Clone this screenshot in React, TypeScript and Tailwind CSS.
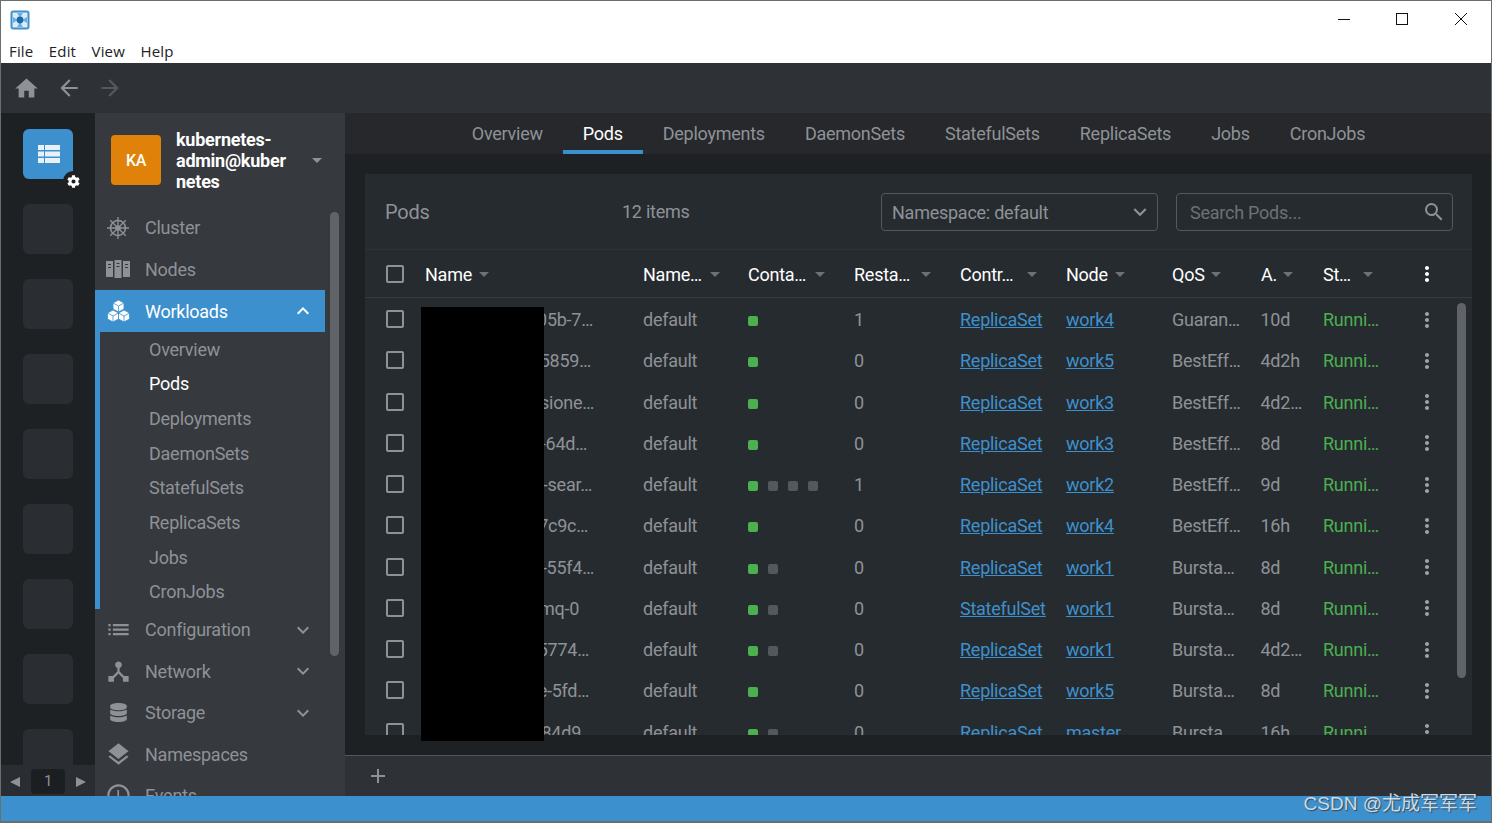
import { FaDatabase, FaCog } from "react-icons/fa";
import {
  MdAccessTime,
  MdAdd,
  MdArrowBack,
  MdArrowDropDown,
  MdArrowForward,
  MdDeviceHub,
  MdExpandLess,
  MdExpandMore,
  MdHome,
  MdLayers,
  MdList,
  MdMoreVert,
  MdSearch,
} from "react-icons/md";

const FONT = "font-['Roboto',sans-serif]";

const pods = [
  { tail: "05b-7…", end: 168, ctrl: "ReplicaSet", node: "work4", qos: "Guaran…", age: "10d", restarts: "1", extra: 0 },
  { tail: "5859…", end: 166, ctrl: "ReplicaSet", node: "work5", qos: "BestEff…", age: "4d2h", restarts: "0", extra: 0 },
  { tail: "sione…", end: 169, ctrl: "ReplicaSet", node: "work3", qos: "BestEff…", age: "4d2…", restarts: "0", extra: 0 },
  { tail: "-64d…", end: 162, ctrl: "ReplicaSet", node: "work3", qos: "BestEff…", age: "8d", restarts: "0", extra: 0 },
  { tail: "-sear…", end: 167, ctrl: "ReplicaSet", node: "work2", qos: "BestEff…", age: "9d", restarts: "1", extra: 3 },
  { tail: "7c9c…", end: 163, ctrl: "ReplicaSet", node: "work4", qos: "BestEff…", age: "16h", restarts: "0", extra: 0 },
  { tail: "-55f4…", end: 169, ctrl: "ReplicaSet", node: "work1", qos: "Bursta…", age: "8d", restarts: "0", extra: 1 },
  { tail: "mq-0", end: 154, ctrl: "StatefulSet", node: "work1", qos: "Bursta…", age: "8d", restarts: "0", extra: 1 },
  { tail: "5774…", end: 164, ctrl: "ReplicaSet", node: "work1", qos: "Bursta…", age: "4d2…", restarts: "0", extra: 1 },
  { tail: "e-5fd…", end: 164, ctrl: "ReplicaSet", node: "work5", qos: "Bursta…", age: "8d", restarts: "0", extra: 0 },
  { tail: "84d9", end: 156, ctrl: "ReplicaSet", node: "master", qos: "Bursta…", age: "16h", restarts: "0", extra: 1 },
];

const headers = [
  { label: "Name…", cls: "w-[105px]", box: "w-[68px]" },
  { label: "Conta…", cls: "w-[106px]", box: "w-[68px]" },
  { label: "Resta…", cls: "w-[106px]", box: "w-[68px]" },
  { label: "Contr…", cls: "w-[106px]", box: "w-[68px]" },
  { label: "Node", cls: "w-[106px]", box: "w-[50px]" },
  { label: "QoS", cls: "w-[89px]", box: "w-[40px]" },
  { label: "A.", cls: "w-[62px]", box: "w-[23px]" },
  { label: "St…", cls: "w-[104px]", box: "w-[41px]" },
];

const tabs = ["Overview", "Pods", "Deployments", "DaemonSets", "StatefulSets", "ReplicaSets", "Jobs", "CronJobs"];
const subItems = ["Overview", "Pods", "Deployments", "DaemonSets", "StatefulSets", "ReplicaSets", "Jobs", "CronJobs"];

function Checkbox() {
  return <div className="h-[18px] w-[18px] shrink-0 rounded-[2px] border-2 border-[#8e9297]" />;
}

function AppLogo() {
  return (
    <svg width="20" height="20" viewBox="0 0 20 20">
      <rect x="0.5" y="0.5" width="19" height="19" rx="3" fill="#3d90ce" />
      <rect x="2.500" y="2.500" width="15" height="15" fill="#dcecf7" />
      <path d="M7 3l3 5 3-5zM17 7l-5 3 5 3zM13 17l-3-5-3 5zM3 13l5-3-5-3z" fill="#6fb0e0" />
      <circle cx="10" cy="10" r="3.400" fill="#1c6aa8" />
    </svg>
  );
}

function WheelIcon() {
  return (
    <svg width="24" height="24" viewBox="0 0 24 24" fill="none" stroke="#8e9297" strokeWidth="1.6">
      <circle cx="12" cy="12" r="7.500" />
      <circle cx="12" cy="12" r="2" fill="#8e9297" />
      <path d="M12 1v22M1 12h22M4.200 4.200l15.600 15.600M19.800 4.200L4.200 19.800" strokeWidth="1.3" />
    </svg>
  );
}

function NodesIcon() {
  return (
    <svg width="24" height="20" viewBox="0 0 24 20" fill="#8e9297">
      <path d="M0 2h7v16H0zM8.500 1h7v18h-7zM17 2h7v16h-7z" />
      <path d="M2 5h3v1H2zM2 8h3v1H2zM10.500 4h3v1h-3zM10.500 7h3v1h-3zM19 5h3v1h-3zM19 8h3v1h-3z" fill="#36393e" />
    </svg>
  );
}

function CubesIcon() {
  return (
    <svg width="23" height="22" viewBox="0 0 23 22">
      <g fill="#fff" stroke="#3d90ce" strokeWidth="0.8">
        <path d="M11.500 0l5.500 3v6l-5.500 3-5.500-3V3z" />
        <path d="M6 10l5.500 3v6l-5.500 3-5.500-3v-6z" />
        <path d="M17 10l5.500 3v6l-5.500 3-5.500-3v-6z" />
        <path fill="none" d="M6 3l5.500 3 5.500-3M11.500 6v6M.5 13l5.500 3 5.500-3M6 16v6M11.500 13l5.500 3 5.500-3M17 16v6" />
      </g>
    </svg>
  );
}

function SideItem({ icon, label, chevron }: { icon: React.ReactNode; label: string; chevron?: boolean }) {
  return (
    <div className="flex h-[41.500px] shrink-0 items-center text-[#8e9297]">
      <div className="flex w-[46px] shrink-0 justify-center">{icon}</div>
      <span className="ml-[4px] flex-1">{label}</span>
      {chevron && <MdExpandMore size={24} className="mr-[10px]" />}
    </div>
  );
}

function PodRow({ pod }: { pod: (typeof pods)[number] }) {
  return (
    <div className="flex h-[41.250px] shrink-0 items-center text-[#8e9297]">
      <div className="flex w-[60px] shrink-0 pb-[1px] pl-[21px]">
        <Checkbox />
      </div>
      <div className="w-[218px] shrink-0">
        <div className="truncate text-right" style={{ width: pod.end }}>
          {pod.tail}
        </div>
      </div>
      <div className="w-[105px] shrink-0">default</div>
      <div className="flex w-[106px] shrink-0 items-center gap-[10px] pt-[3px]">
        <span className="h-[10px] w-[10px] rounded-[2px] bg-[#4caf50]" />
        {pod.extra > 0 && <span className="h-[10px] w-[10px] rounded-[2px] bg-[#54585d]" />}
        {pod.extra > 1 && <span className="h-[10px] w-[10px] rounded-[2px] bg-[#54585d]" />}
        {pod.extra > 2 && <span className="h-[10px] w-[10px] rounded-[2px] bg-[#54585d]" />}
      </div>
      <div className="w-[106px] shrink-0">{pod.restarts}</div>
      <div className="w-[106px] shrink-0 text-[#3d90ce] underline">{pod.ctrl}</div>
      <div className="w-[106px] shrink-0 text-[#3d90ce] underline">{pod.node}</div>
      <div className="w-[88.500px] shrink-0">{pod.qos}</div>
      <div className="w-[62.500px] shrink-0">{pod.age}</div>
      <div className="w-[92px] shrink-0 text-[#4caf50]">Runni…</div>
      <MdMoreVert size={24} className="shrink-0 text-[#a0a4a8]" />
    </div>
  );
}

export default function App() {
  return (
    <div className={`${FONT} relative flex h-[823px] w-[1492px] flex-col overflow-hidden border border-b-2 border-[#6b6f6b] bg-white text-[18px] tracking-[-0.25px]`}>
      <div className="flex h-[37px] shrink-0 items-center justify-between pl-[9px] pr-[24px]">
        <AppLogo />
        <div className="flex items-center gap-[46px] pb-[2px]">
          <svg width="12" height="12" viewBox="0 0 12 12" stroke="#111" fill="none"><path d="M0 6.500h12" /></svg>
          <svg width="12" height="12" viewBox="0 0 12 12" stroke="#111" fill="none" className="mr-[1px]"><rect x="0.500" y="0.500" width="11" height="11" /></svg>
          <svg width="12" height="12" viewBox="0 0 12 12" stroke="#111" fill="none"><path d="M0 0l12 12M12 0L0 12" /></svg>
        </div>
      </div>
      <div className="flex h-[25px] shrink-0 items-center gap-[15.500px] pl-[8px] pt-[2px] font-['Open_Sans',sans-serif] text-[15px] tracking-[0.15px] text-[#222]">
        <span>File</span>
        <span>Edit</span>
        <span>View</span>
        <span>Help</span>
      </div>

      <div className="flex h-[50px] shrink-0 items-center bg-[#2e3136] pl-[12px]">
        <MdHome size={27} className="text-[#8e9297]" />
        <MdArrowBack size={26} className="ml-[16px] text-[#8e9297]" />
        <MdArrowForward size={26} className="ml-[15px] text-[#55595e]" />
      </div>

      <div className="flex min-h-0 flex-1">
        <div className="flex w-[94px] shrink-0 flex-col bg-[#1e2124]">
          <div className="relative flex min-h-0 flex-1 flex-col items-center gap-[25px] overflow-hidden pt-[16px]">
            <div className="relative flex h-[50px] w-[50px] shrink-0 items-center justify-center rounded-[6px] bg-[#3d90ce] pl-[1px]">
              <svg width="22" height="18" viewBox="0 0 22 18" fill="#e8f0f8">
                <path d="M0 0h6v5H0zM7 0h15v5H7zM0 6.500h6v5H0zM7 6.500h15v5H7zM0 13h6v5H0zM7 13h15v5H7z" />
              </svg>
              <div className="absolute -bottom-[12px] -right-[10px] flex h-[20px] w-[20px] items-center justify-center rounded-full bg-[#1e2124]">
                <FaCog size={13} className="text-white" />
              </div>
            </div>
            {[0, 1, 2, 3, 4, 5, 6, 7].map((i) => (
              <div key={i} className="h-[50px] w-[50px] shrink-0 rounded-[6px] bg-[#2a2d31]" />
            ))}
          </div>
          <div className="flex h-[31px] shrink-0 items-center justify-between bg-[#2a2d31] pl-[8px] pr-[8px] pt-[2px] text-[#8e9297]">
            <svg width="12" height="12" viewBox="0 0 12 12" fill="#8e9297"><path d="M11 1v10L1 6z" /></svg>
            <div className="flex h-[25px] w-[34px] items-center justify-center rounded-[4px] bg-[#1c1f22] text-[15px]">1</div>
            <svg width="12" height="12" viewBox="0 0 12 12" fill="#8e9297"><path d="M1 1v10l10-5z" /></svg>
          </div>
        </div>

        <div className="relative flex w-[250px] shrink-0 flex-col overflow-hidden bg-[#36393e]">
          <div className="flex h-[94px] shrink-0 items-center pl-[16px]">
            <div className="flex h-[50px] w-[50px] shrink-0 items-center justify-center rounded-[4px] bg-[#e08109] pt-[1px] text-[16px] font-medium text-white">KA</div>
            <div className="ml-[15px] w-[112px] break-all text-[18px] font-bold leading-[21px] text-white">
              kubernetes-
              <br />
              admin@kuber
              <br />
              netes
            </div>
            <MdArrowDropDown size={24} className="ml-[17px] shrink-0 text-[#8e9297]" />
          </div>
          <div className="flex w-[230px] flex-col">
            <SideItem icon={<WheelIcon />} label="Cluster" />
            <SideItem icon={<NodesIcon />} label="Nodes" />
            <div className="flex h-[42px] shrink-0 items-center bg-[#3d90ce] text-white">
              <div className="flex w-[46px] shrink-0 justify-center">
                <CubesIcon />
              </div>
              <span className="ml-[4px] flex-1">Workloads</span>
              <MdExpandLess size={24} className="mr-[10px]" />
            </div>
            <div className="flex h-[277px] shrink-0 flex-col justify-around border-l-[5px] border-[#3d90ce] pl-[49px] text-[#8e9297]">
              {subItems.map((s) => (
                <span key={s} className={s === "Pods" ? "text-white" : ""}>{s}</span>
              ))}
            </div>
            <SideItem icon={<MdList size={27} />} label="Configuration" chevron />
            <SideItem icon={<MdDeviceHub size={27} />} label="Network" chevron />
            <SideItem icon={<FaDatabase size={19} />} label="Storage" chevron />
            <SideItem icon={<MdLayers size={27} />} label="Namespaces" />
            <SideItem icon={<MdAccessTime size={27} />} label="Events" />
          </div>
          <div className="absolute right-[6px] top-[99px] h-[444px] w-[9px] rounded-[5px] bg-[#606368]" />
        </div>

        <div className="flex min-w-0 flex-1 flex-col bg-[#1e2124]">
          <div className="flex h-[41px] shrink-0 justify-center bg-[#26282b] pl-[1px]">
            {tabs.map((t) => (
              <div key={t} className={`flex h-[41px] items-center border-b-[4px] px-[20px] pt-[3px] ${t === "Pods" ? "border-[#3d90ce] text-white" : "border-transparent text-[#8e9297]"}`}>
                {t}
              </div>
            ))}
          </div>
          <div className="flex min-h-0 flex-1 flex-col py-[20px] pl-[20px] pr-[19px]">
            <div className="relative flex min-h-0 flex-1 flex-col overflow-hidden bg-[#262b2f]">
              <div className="flex h-[76px] shrink-0 items-center border-b border-[#2f3438] pl-[20px] pr-[19px] text-[#8e9297]">
                <span className="w-[237px] shrink-0 text-[20px]">Pods</span>
                <span className="w-[68px] shrink-0 whitespace-nowrap text-[18px]">12 items</span>
                <div className="ml-[191px] flex h-[38px] w-[277px] shrink-0 items-center justify-between rounded-[4px] border border-[#54585d] pl-[10px] pr-[4px]">
                  <span className="pt-[1px]">Namespace: default</span>
                  <MdExpandMore size={26} />
                </div>
                <div className="ml-[18px] flex h-[38px] w-[277px] shrink-0 items-center justify-between rounded-[4px] border border-[#54585d] pl-[13px] pr-[6px]">
                  <span className="pt-[1px] text-[#6d7176]">Search Pods...</span>
                  <MdSearch size={24} />
                </div>
              </div>
              <div className="flex h-[48px] shrink-0 items-center border-b border-[#363a3e] pt-[1px] text-white">
                <div className="flex w-[60px] shrink-0 pl-[21px]">
                  <Checkbox />
                </div>
                <div className="flex w-[218px] shrink-0 items-center">
                  Name
                  <MdArrowDropDown size={24} className="text-[#6d7176]" />
                </div>
                {headers.map((h) => (
                  <div key={h.label} className={`flex shrink-0 items-center ${h.cls}`}>
                    <span className={h.box}>{h.label}</span>
                    <MdArrowDropDown size={24} className="-ml-[8px] text-[#6d7176]" />
                  </div>
                ))}
                <MdMoreVert size={24} className="-ml-[12px] shrink-0" />
              </div>
              <div className="relative min-h-0 flex-1 overflow-hidden pt-[1px]">
                {pods.map((p, i) => (
                  <PodRow key={i} pod={p} />
                ))}
                <div className="absolute right-[6px] top-[5px] h-[375px] w-[9px] rounded-[5px] bg-[#606368]" />
              </div>
            </div>
          </div>
          <div className="flex h-[41px] shrink-0 items-center border-t border-[#54585d] bg-[#2e3136] pl-[21px] text-[#8e9297]">
            <MdAdd size={24} />
          </div>
        </div>
      </div>

      <div className="flex h-[25px] shrink-0 items-center justify-end bg-[#3d90ce] pb-[9px] pr-[14px] font-['Liberation_Sans','Noto_Sans_CJK_SC',sans-serif] text-[19px] tracking-normal text-[#c8dcec] [text-shadow:1px_1px_1px_#444]">
        CSDN @尤成军军军
      </div>

      <div className="absolute left-[420px] top-[306px] h-[434px] w-[123px] bg-black" />
    </div>
  );
}
